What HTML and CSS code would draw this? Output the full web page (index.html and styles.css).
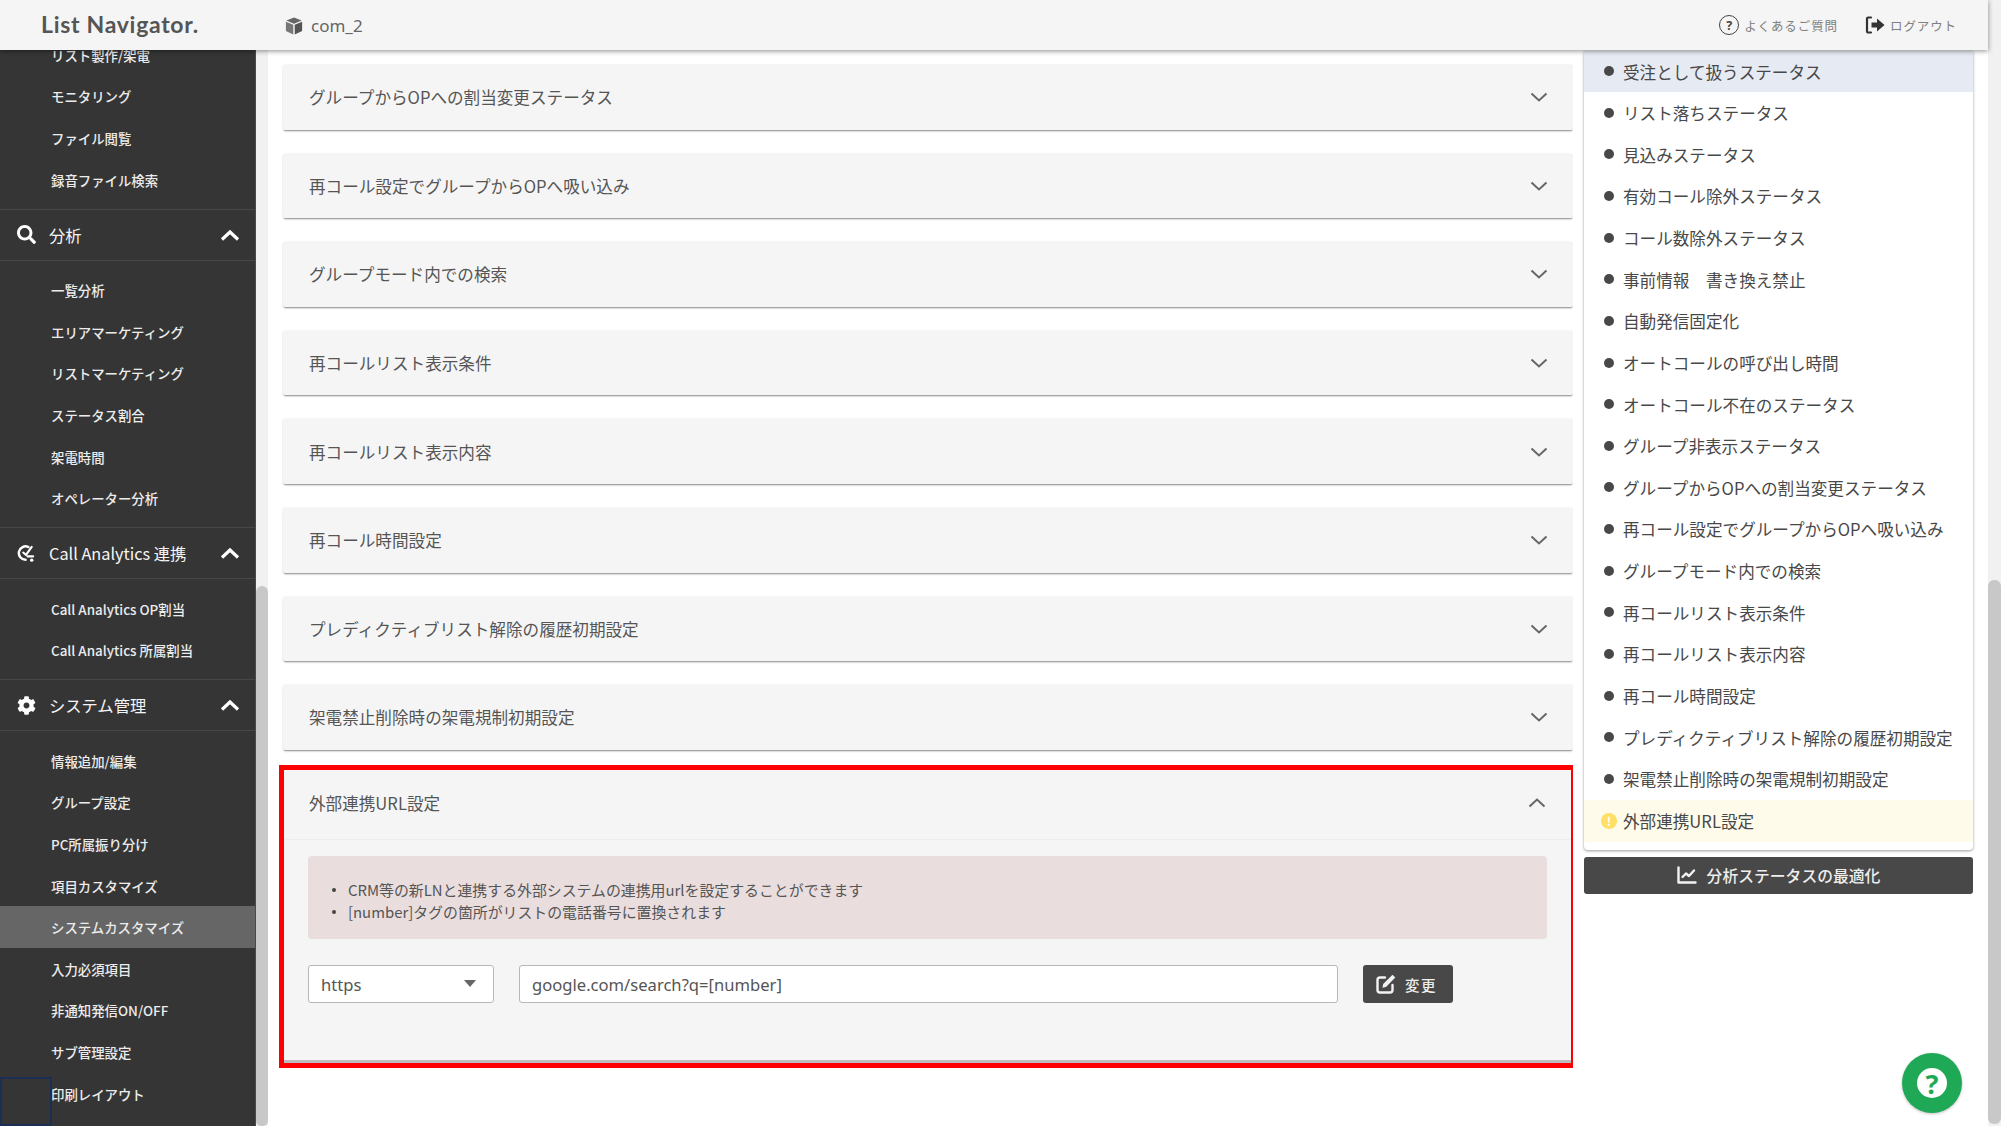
FILE: index.html
```html
<!DOCTYPE html>
<html lang="ja">
<head>
<meta charset="utf-8">
<title>List Navigator</title>
<link rel="stylesheet" href="styles.css">
</head>
<body>
<div class="page">
  <div class="app">
    <header class="topbar">
      <div class="logo">List Navigator.</div>
      <div class="company">
        <svg class="cube" viewBox="0 0 20 20"><path fill="#666" d="M10 .5l8.5 3.4L10 7.4 1.500 3.900z"/><path fill="#777" d="M1 5.300l8.200 3.400v10.700L1 15.500z"/><path fill="#555" d="M19 5.300l-8.200 3.400v10.700l8.200-3.900z"/></svg>
        <span>com_2</span>
      </div>
      <nav class="toplinks">
        <a class="toplink"><span class="qmark">?</span><span>よくあるご質問</span></a>
        <a class="toplink"><svg class="logout" viewBox="0 0 20 20"><path fill="none" stroke="#333" stroke-width="2.200" stroke-linecap="round" stroke-linejoin="round" d="M6 2.500H3.300A1.300 1.300 0 0 0 2 3.800v12.400a1.300 1.300 0 0 0 1.300 1.300H6"/><path fill="#333" d="M6.500 7.500h5.500V3.500l7.500 6.500-7.500 6.500v-4H6.500z"/></svg><span>ログアウト</span></a>
      </nav>
    </header>
    <div class="body">
      <aside class="sidebar">
        <ul class="subnav subnav-first">
          <li>リスト製作/架電</li><li>モニタリング</li><li>ファイル閲覧</li><li>録音ファイル検索</li>
        </ul>
        <div class="section">
          <svg class="sec-icon" viewBox="0 0 512 512"><path fill="#fff" d="M505 442.700L405.300 343c-4.500-4.500-10.600-7-17-7H372c27.600-35.300 44-79.700 44-128C416 93.100 322.900 0 208 0S0 93.100 0 208s93.100 208 208 208c48.300 0 92.700-16.400 128-44v16.300c0 6.400 2.500 12.500 7 17l99.700 99.700c9.400 9.400 24.600 9.400 33.900 0l28.300-28.300c9.400-9.400 9.400-24.600.1-34zM208 336c-70.700 0-128-57.200-128-128 0-70.700 57.200-128 128-128 70.700 0 128 57.200 128 128 0 70.700-57.200 128-128 128z"/></svg>
          <span class="sec-title">分析</span>
          <svg class="sec-chev" viewBox="0 0 20 12"><path fill="none" stroke="#fff" stroke-width="3.200" d="M2 10.500l8-7.500 8 7.500"/></svg>
        </div>
        <ul class="subnav">
          <li>一覧分析</li><li>エリアマーケティング</li><li>リストマーケティング</li><li>ステータス割合</li><li>架電時間</li><li>オペレーター分析</li>
        </ul>
        <div class="section">
          <svg class="sec-icon" viewBox="0 0 20 20"><path fill="none" stroke="#fff" stroke-width="2.600" stroke-linecap="round" d="M12 3.200A7 7 0 1 0 9 16.500"/><path fill="none" stroke="#fff" stroke-width="2.200" stroke-linecap="round" stroke-linejoin="round" d="M6.500 9l3 2.500L15.500 3M11 13h6"/><circle cx="15.500" cy="17" r="1.800" fill="#fff"/></svg>
          <span class="sec-title">Call Analytics 連携</span>
          <svg class="sec-chev" viewBox="0 0 20 12"><path fill="none" stroke="#fff" stroke-width="3.200" d="M2 10.500l8-7.500 8 7.500"/></svg>
        </div>
        <ul class="subnav">
          <li>Call Analytics OP割当</li><li>Call Analytics 所属割当</li>
        </ul>
        <div class="section">
          <svg class="sec-icon" viewBox="0 0 512 512"><path fill="#fff" d="M487.400 315.700l-42.600-24.600c4.300-23.200 4.300-47 0-70.200l42.600-24.600c4.900-2.800 7.100-8.600 5.500-14-11.100-35.600-30-67.800-54.700-94.600-3.800-4.100-10-5.100-14.800-2.300L380.800 110c-17.900-15.400-38.500-27.300-60.800-35.100V25.800c0-5.600-3.900-10.500-9.400-11.700-36.700-8.200-74.300-7.800-109.200 0-5.500 1.200-9.400 6.100-9.400 11.700V75c-22.200 7.900-42.800 19.800-60.800 35.100L88.700 85.500c-4.900-2.800-11-1.900-14.800 2.300-24.700 26.700-43.600 58.900-54.700 94.600-1.700 5.400.6 11.200 5.500 14L67.300 221c-4.300 23.200-4.300 47 0 70.200l-42.600 24.600c-4.900 2.800-7.100 8.600-5.500 14 11.100 35.600 30 67.800 54.700 94.600 3.800 4.100 10 5.100 14.800 2.300l42.600-24.600c17.900 15.400 38.500 27.300 60.800 35.100v49.200c0 5.600 3.900 10.500 9.400 11.700 36.700 8.200 74.300 7.800 109.200 0 5.500-1.200 9.400-6.100 9.400-11.700v-49.200c22.200-7.900 42.800-19.800 60.800-35.100l42.600 24.600c4.900 2.800 11 1.900 14.800-2.300 24.700-26.700 43.600-58.900 54.700-94.600 1.500-5.500-.7-11.300-5.600-14.100zM256 336c-44.100 0-80-35.900-80-80s35.900-80 80-80 80 35.900 80 80-35.900 80-80 80z"/></svg>
          <span class="sec-title">システム管理</span>
          <svg class="sec-chev" viewBox="0 0 20 12"><path fill="none" stroke="#fff" stroke-width="3.200" d="M2 10.500l8-7.500 8 7.500"/></svg>
        </div>
        <ul class="subnav">
          <li>情報追加/編集</li><li>グループ設定</li><li>PC所属振り分け</li><li>項目カスタマイズ</li><li class="current">システムカスタマイズ</li><li>入力必須項目</li><li>非通知発信ON/OFF</li><li>サブ管理設定</li><li>印刷レイアウト</li>
        </ul>
        <div class="focus-box"></div>
      </aside>
      <div class="side-scroll"><div class="side-thumb"></div></div>
      <main class="content">
        <section class="card"><span>グループからOPへの割当変更ステータス</span><svg class="chev" viewBox="0 0 18 10"><path d="M1.500 1.500L9 8.500l7.500-7"/></svg></section>
        <section class="card"><span>再コール設定でグループからOPへ吸い込み</span><svg class="chev" viewBox="0 0 18 10"><path d="M1.500 1.500L9 8.500l7.500-7"/></svg></section>
        <section class="card"><span>グループモード内での検索</span><svg class="chev" viewBox="0 0 18 10"><path d="M1.500 1.500L9 8.500l7.500-7"/></svg></section>
        <section class="card"><span>再コールリスト表示条件</span><svg class="chev" viewBox="0 0 18 10"><path d="M1.500 1.500L9 8.500l7.500-7"/></svg></section>
        <section class="card"><span>再コールリスト表示内容</span><svg class="chev" viewBox="0 0 18 10"><path d="M1.500 1.500L9 8.500l7.500-7"/></svg></section>
        <section class="card"><span>再コール時間設定</span><svg class="chev" viewBox="0 0 18 10"><path d="M1.500 1.500L9 8.500l7.500-7"/></svg></section>
        <section class="card"><span>プレディクティブリスト解除の履歴初期設定</span><svg class="chev" viewBox="0 0 18 10"><path d="M1.500 1.500L9 8.500l7.500-7"/></svg></section>
        <section class="card"><span>架電禁止削除時の架電規制初期設定</span><svg class="chev" viewBox="0 0 18 10"><path d="M1.500 1.500L9 8.500l7.500-7"/></svg></section>
        <section class="open-card">
          <div class="open-head"><span>外部連携URL設定</span><svg class="chev" viewBox="0 0 18 10"><path d="M1.500 8.500L9 1.500l7.500 7"/></svg></div>
          <div class="open-body">
            <ul class="notice">
              <li>CRM等の新LNと連携する外部システムの連携用urlを設定することができます</li>
              <li>[number]タグの箇所がリストの電話番号に置換されます</li>
            </ul>
            <div class="url-row">
              <div class="select-wrap"><select class="scheme"><option>https</option><option>http</option></select></div>
              <input class="url" type="text" value="google.com/search?q=[number]">
              <button class="save" type="button">
                <svg viewBox="0 0 20 20"><path fill="none" stroke="#f2f2f2" stroke-width="2.400" stroke-linecap="round" d="M9 3.500H4a2.500 2.500 0 0 0-2.500 2.500v10A2.500 2.500 0 0 0 4 18.500h10a2.500 2.500 0 0 0 2.500-2.500v-5"/><path fill="#f2f2f2" d="M16.500.8l2.800 2.800-9.300 9.300-3.600.8.800-3.600z"/></svg>
                <span>変更</span>
              </button>
            </div>
          </div>
        </section>
      </main>
      <aside class="rail">
        <ul class="toc">
          <li class="toc-item toc-active">受注として扱うステータス</li>
          <li class="toc-item">リスト落ちステータス</li>
          <li class="toc-item">見込みステータス</li>
          <li class="toc-item">有効コール除外ステータス</li>
          <li class="toc-item">コール数除外ステータス</li>
          <li class="toc-item">事前情報　書き換え禁止</li>
          <li class="toc-item">自動発信固定化</li>
          <li class="toc-item">オートコールの呼び出し時間</li>
          <li class="toc-item">オートコール不在のステータス</li>
          <li class="toc-item">グループ非表示ステータス</li>
          <li class="toc-item">グループからOPへの割当変更ステータス</li>
          <li class="toc-item">再コール設定でグループからOPへ吸い込み</li>
          <li class="toc-item">グループモード内での検索</li>
          <li class="toc-item">再コールリスト表示条件</li>
          <li class="toc-item">再コールリスト表示内容</li>
          <li class="toc-item">再コール時間設定</li>
          <li class="toc-item">プレディクティブリスト解除の履歴初期設定</li>
          <li class="toc-item">架電禁止削除時の架電規制初期設定</li>
          <li class="toc-item toc-warn"><span class="warn-mark">!</span>外部連携URL設定</li>
        </ul>
        <button class="optimize" type="button">
          <svg viewBox="0 0 20 18"><path fill="none" stroke="#f2f2f2" stroke-width="2.400" stroke-linecap="round" stroke-linejoin="round" d="M1.500 1.500v15h17"/><path fill="none" stroke="#f2f2f2" stroke-width="2.400" stroke-linecap="round" stroke-linejoin="round" d="M5.500 11l3.500-3.500 3 2.500 5-5.500"/></svg>
          <span>分析ステータスの最適化</span>
        </button>
      </aside>
    </div>
    <button class="help" type="button"><span class="help-inner">?</span></button>
  </div>
  <div class="page-scroll"><div class="page-thumb"></div></div>
</div>
</body>
</html>
```
FILE: styles.css
```css
* { box-sizing: border-box; }
html, body { margin: 0; padding: 0; height: 100%; overflow: hidden; background: #fff; }
body { font-family: "Noto Sans CJK JP", "Noto Sans", sans-serif; color: #484848; }
ul { margin: 0; padding: 0; list-style: none; }

.page { display: flex; width: 2001px; height: 1126px; }
.app { position: relative; flex: 1; min-width: 0; display: flex; flex-direction: column; }

.topbar {
  position: relative; z-index: 5; flex: none; height: 50px; display: flex; align-items: center;
  background: #f5f5f5; box-shadow: 0 1px 5px rgba(0,0,0,.45);
}
.logo { width: 285px; padding-left: 41px; font-family: "Lato", sans-serif; font-size: 23px; font-weight: 700; letter-spacing: .7px; color: #555; margin-top: -3px; }
.company { display: flex; align-items: center; gap: 8px; font-family: "Noto Sans", sans-serif; font-size: 17px; color: #666; margin-top: 1px; }
.cube { width: 18px; height: 18px; }
.toplinks { margin-left: auto; display: flex; gap: 27px; padding-right: 31px; }
.toplink { display: flex; align-items: center; gap: 5px; font-size: 12.500px; letter-spacing: .9px; color: #808080; }
.qmark { width: 20px; height: 20px; border: 1.800px solid #444; border-radius: 50%; display: flex; align-items: center; justify-content: center; font-family: "Noto Sans", sans-serif; font-weight: 700; font-size: 12.500px; letter-spacing: 0; color: #444; }
.logout { width: 20px; height: 20px; }

.body { flex: 1; min-height: 0; display: flex; }

.sidebar { position: relative; flex: none; width: 256px; background: #353535; overflow: hidden; color: #f0f0f0; border-right: 1px solid #4a4a4a; }
.subnav { padding: 8.500px 0 8.300px; border-bottom: 1px solid #474747; }
.subnav:last-of-type { border-bottom: 0; }
.subnav-first { margin-top: -24px; padding-top: 8px; }
.subnav li { height: 41.640px; display: flex; align-items: center; padding-left: 51px; font-size: 13.400px; font-weight: 500; white-space: nowrap; color: #ececec; }
.subnav .current { background: #666; }
.section { height: 51px; display: flex; align-items: center; padding-left: 17px; padding-right: 15px; border-bottom: 1px solid #474747; color: #f5f5f5; }
.sec-icon { width: 19px; height: 19px; flex: none; }
.sec-title { margin-left: 13px; font-size: 16.300px; white-space: nowrap; }
.sec-chev { margin-left: auto; width: 20px; height: 12px; flex: none; }
.focus-box { position: absolute; left: 0; bottom: 0; width: 52px; height: 49px; border: 2px solid #1b2f55; }

.side-scroll { flex: none; width: 12px; background: #f1f1f1; padding-top: 536px; }
.side-thumb { height: 540px; background: #c8c8c8; border-radius: 6px 6px 5px 5px; }

.content { flex: none; width: 1305px; padding: 15px 0 0 15px; display: flex; flex-direction: column; gap: 24px; overflow: hidden; }
.card {
  flex: none; width: 1290px; height: 64.600px; display: flex; align-items: center; justify-content: space-between;
  padding: 0 25px 0 26px; background: #f5f5f5; border-radius: 2px;
  box-shadow: 0 2px 2px -1px rgba(0,0,0,.45), 0 0 2px rgba(0,0,0,.12);
  font-size: 16.600px; color: #555;
}
.chev { width: 18px; height: 10px; flex: none; }
.chev path { fill: none; stroke: #666; stroke-width: 2; }

.open-card { flex: none; margin: -8.600px 0 0 -4px; width: 1297px; height: 303px; border: 5px solid #f00; background: #f5f5f5; box-shadow: inset 0 -3px 0 #bdbdbd; }
.open-head { height: 70px; display: flex; align-items: center; justify-content: space-between; padding: 0 25px 4px 25px; border-bottom: 1px solid #eeeeee; font-size: 16.600px; color: #555; }
.open-body { padding: 16px 24px 0; }
.notice { height: 83px; padding: 23px 40px 0; background: #e9dddd; border-radius: 4px; font-size: 14.900px; line-height: 22px; color: #555; }
.notice li { position: relative; }
.notice li::before { content: ""; position: absolute; left: -16px; top: 9px; width: 4px; height: 4px; border-radius: 50%; background: #444; }
.url-row { display: flex; align-items: center; margin-top: 26px; }
.select-wrap { position: relative; width: 186px; height: 38px; }
.select-wrap::after { content: ""; position: absolute; right: 18px; top: 15px; border: 6.500px solid transparent; border-top: 7px solid #666; border-bottom: 0; }
.scheme, .url { height: 38px; border: 1px solid #b8b8b8; border-radius: 3px; background: #fff; font-family: "Noto Sans", "Noto Sans CJK JP", sans-serif; font-size: 16.600px; color: #555; outline: none; }
.scheme { width: 100%; padding: 0 12px; appearance: none; -webkit-appearance: none; }
.url { width: 819px; margin-left: 25px; padding: 0 12px; }
.save { margin-left: 25px; width: 90px; height: 38px; display: flex; align-items: center; gap: 9px; padding: 0 0 0 13px; border: 0; border-radius: 3px; background: #484848; color: #eee; font-family: inherit; font-size: 14.500px; font-weight: 500; letter-spacing: 1.500px; }
.save svg { width: 20px; height: 20px; flex: none; }

.rail { flex: none; width: 389px; margin-left: 11px; display: flex; flex-direction: column; }
.toc { background: #fff; padding-bottom: 8px; border-radius: 0 0 4px 4px; box-shadow: 0 1px 3px rgba(0,0,0,.4); margin-top: .700px; }
.toc-item { position: relative; height: 41.640px; display: flex; align-items: center; padding-left: 39px; font-size: 16.600px; color: #484848; white-space: nowrap; }
.toc-item::before { content: ""; position: absolute; left: 20px; top: 15.500px; width: 10px; height: 10px; border-radius: 50%; background: #484848; }
.toc-active { background: #e6eaf2; }
.toc-warn { background: #fefbea; }
.toc-warn::before { display: none; }
.warn-mark { position: absolute; left: 17px; top: 13px; width: 16px; height: 16px; border-radius: 50%; background: #ffe066; display: flex; align-items: center; justify-content: center; font-size: 12px; font-weight: 700; color: #fff; }
.optimize { flex: none; margin-top: 7px; height: 37px; display: flex; align-items: center; justify-content: center; gap: 10px; border: 0; border-radius: 3px; background: #484848; color: #eee; font-family: inherit; font-size: 15.800px; font-weight: 500; padding: 0; }
.optimize svg { width: 20px; height: 18px; flex: none; }

.help { position: absolute; left: 1902px; top: 1053px; width: 60px; height: 60px; padding: 0; border: 0; border-radius: 50%; background: #1fa855; display: flex; align-items: center; justify-content: center; box-shadow: 0 1px 3px rgba(0,0,0,.25); }
.help-inner { width: 30px; height: 30px; border-radius: 50%; background: #fff; display: flex; align-items: center; justify-content: center; font-family: "Noto Sans", sans-serif; font-size: 27px; font-weight: 700; line-height: 1; color: #1fa855; }

.page-scroll { flex: none; width: 13px; background: #f1f1f1; padding-top: 580px; }
.page-thumb { height: 544px; background: #c8c8c8; border-radius: 6px; }
```
